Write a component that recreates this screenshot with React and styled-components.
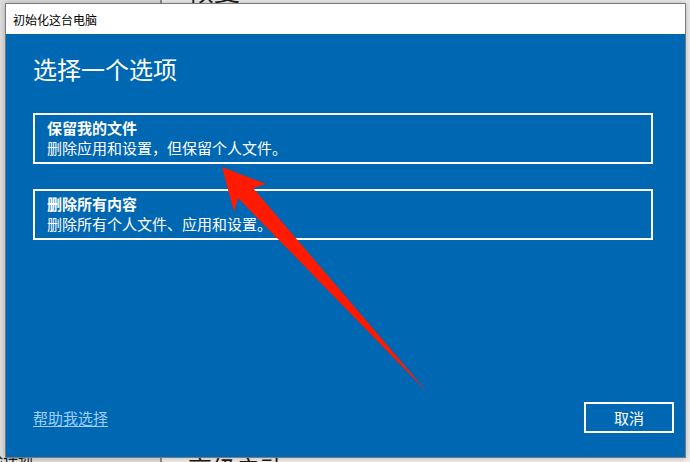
import React from 'react';
import styled, { createGlobalStyle } from 'styled-components';

const GlobalStyle = createGlobalStyle`
    html, body {
        margin: 0;
        padding: 0;
    }
    body {
        width: 690px;
        height: 462px;
        overflow: hidden;
        font-family: "Noto Sans CJK SC", "Noto Sans", sans-serif;
    }
`;

const Desktop = styled.div`
    position: relative;
    width: 690px;
    height: 462px;
    overflow: hidden;
    background: #e9e9e9;
`;

// settings window behind the dialog, only its edges show
const BackWindow = styled.div`
    position: absolute;
    inset: 0;
    display: grid;
    grid-template-columns: 162px 1fr;
`;

const BackNav = styled.div`
    position: relative;
    background: #dedede;
    border-right: 2px solid #8c8c8c;
`;

const BackMain = styled.div`
    position: relative;
    background: #ededed;
`;

const BackText = styled.span`
    position: absolute;
    left: ${(p) => p.left}px;
    top: ${(p) => p.top}px;
    font-size: ${(p) => p.size}px;
    color: #1a1a1a;
    white-space: nowrap;
    line-height: 1;
`;

const Dialog = styled.div`
    position: absolute;
    left: 5px;
    top: 3px;
    width: 681px;
    height: 455px;
    box-sizing: border-box;
    border: 1px solid #7a7a7a;
    box-shadow: 0 0 6px rgba(0, 0, 0, 0.25);
    display: flex;
    flex-direction: column;
    background: #0067b3;
`;

const TitleBar = styled.div`
    height: 30px;
    flex: none;
    background: #ffffff;
    display: flex;
    align-items: center;
    padding-left: 7px;
    font-size: 12px;
    color: #000000;
`;

const Body = styled.div`
    flex: 1;
    display: flex;
    flex-direction: column;
    color: #ffffff;
`;

const Heading = styled.h1`
    margin: 19px 0 0 27px;
    font-size: 24px;
    font-weight: 400;
    line-height: 32px;
`;

const Options = styled.div`
    margin: 28px 32px 0 27px;
    display: flex;
    flex-direction: column;
    gap: 25px;
`;

const Option = styled.div`
    border: 2px solid #ffffff;
    padding: 3px 12px 4px;
    display: flex;
    flex-direction: column;
    cursor: pointer;
`;

const OptionTitle = styled.div`
    font-size: 15px;
    font-weight: 700;
    line-height: 20px;
`;

const OptionText = styled.div`
    font-size: 15px;
    line-height: 20px;
`;

const Footer = styled.div`
    margin-top: auto;
    margin-bottom: 24px;
    padding: 0 11px 0 27px;
    display: flex;
    align-items: center;
    justify-content: space-between;
`;

const HelpLink = styled.a`
    font-size: 15px;
    color: #9fd0ff;
    text-decoration: underline;
    text-underline-offset: 2px;
    cursor: pointer;
`;

const CancelButton = styled.button`
    width: 90px;
    height: 31px;
    background: transparent;
    border: 2px solid #ffffff;
    color: #ffffff;
    font-family: inherit;
    font-size: 15px;
    padding: 0;
`;

const Arrow = styled.svg`
    position: absolute;
    inset: 0;
    pointer-events: none;
`;

export default function App() {
    return (
        <Desktop>
            <GlobalStyle />
            <BackWindow>
                <BackNav>
                    <BackText left={-27} top={452} size={15}>
                        体验计划
                    </BackText>
                </BackNav>
                <BackMain>
                    <BackText left={26} top={-23} size={26}>
                        恢复
                    </BackText>
                    <BackText left={26} top={456} size={24}>
                        高级启动
                    </BackText>
                </BackMain>
            </BackWindow>

            <Dialog>
                <TitleBar>初始化这台电脑</TitleBar>
                <Body>
                    <Heading>选择一个选项</Heading>
                    <Options>
                        <Option>
                            <OptionTitle>保留我的文件</OptionTitle>
                            <OptionText>删除应用和设置，但保留个人文件。</OptionText>
                        </Option>
                        <Option>
                            <OptionTitle>删除所有内容</OptionTitle>
                            <OptionText>删除所有个人文件、应用和设置。</OptionText>
                        </Option>
                    </Options>
                    <Footer>
                        <HelpLink>帮助我选择</HelpLink>
                        <CancelButton>取消</CancelButton>
                    </Footer>
                </Body>
            </Dialog>

            <Arrow width="690" height="462" viewBox="0 0 690 462">
                <polygon
                    points="222,167 266,184 253,188 428,393 238,198 234,212"
                    fill="#ff1a00"
                />
            </Arrow>
        </Desktop>
    );
}
